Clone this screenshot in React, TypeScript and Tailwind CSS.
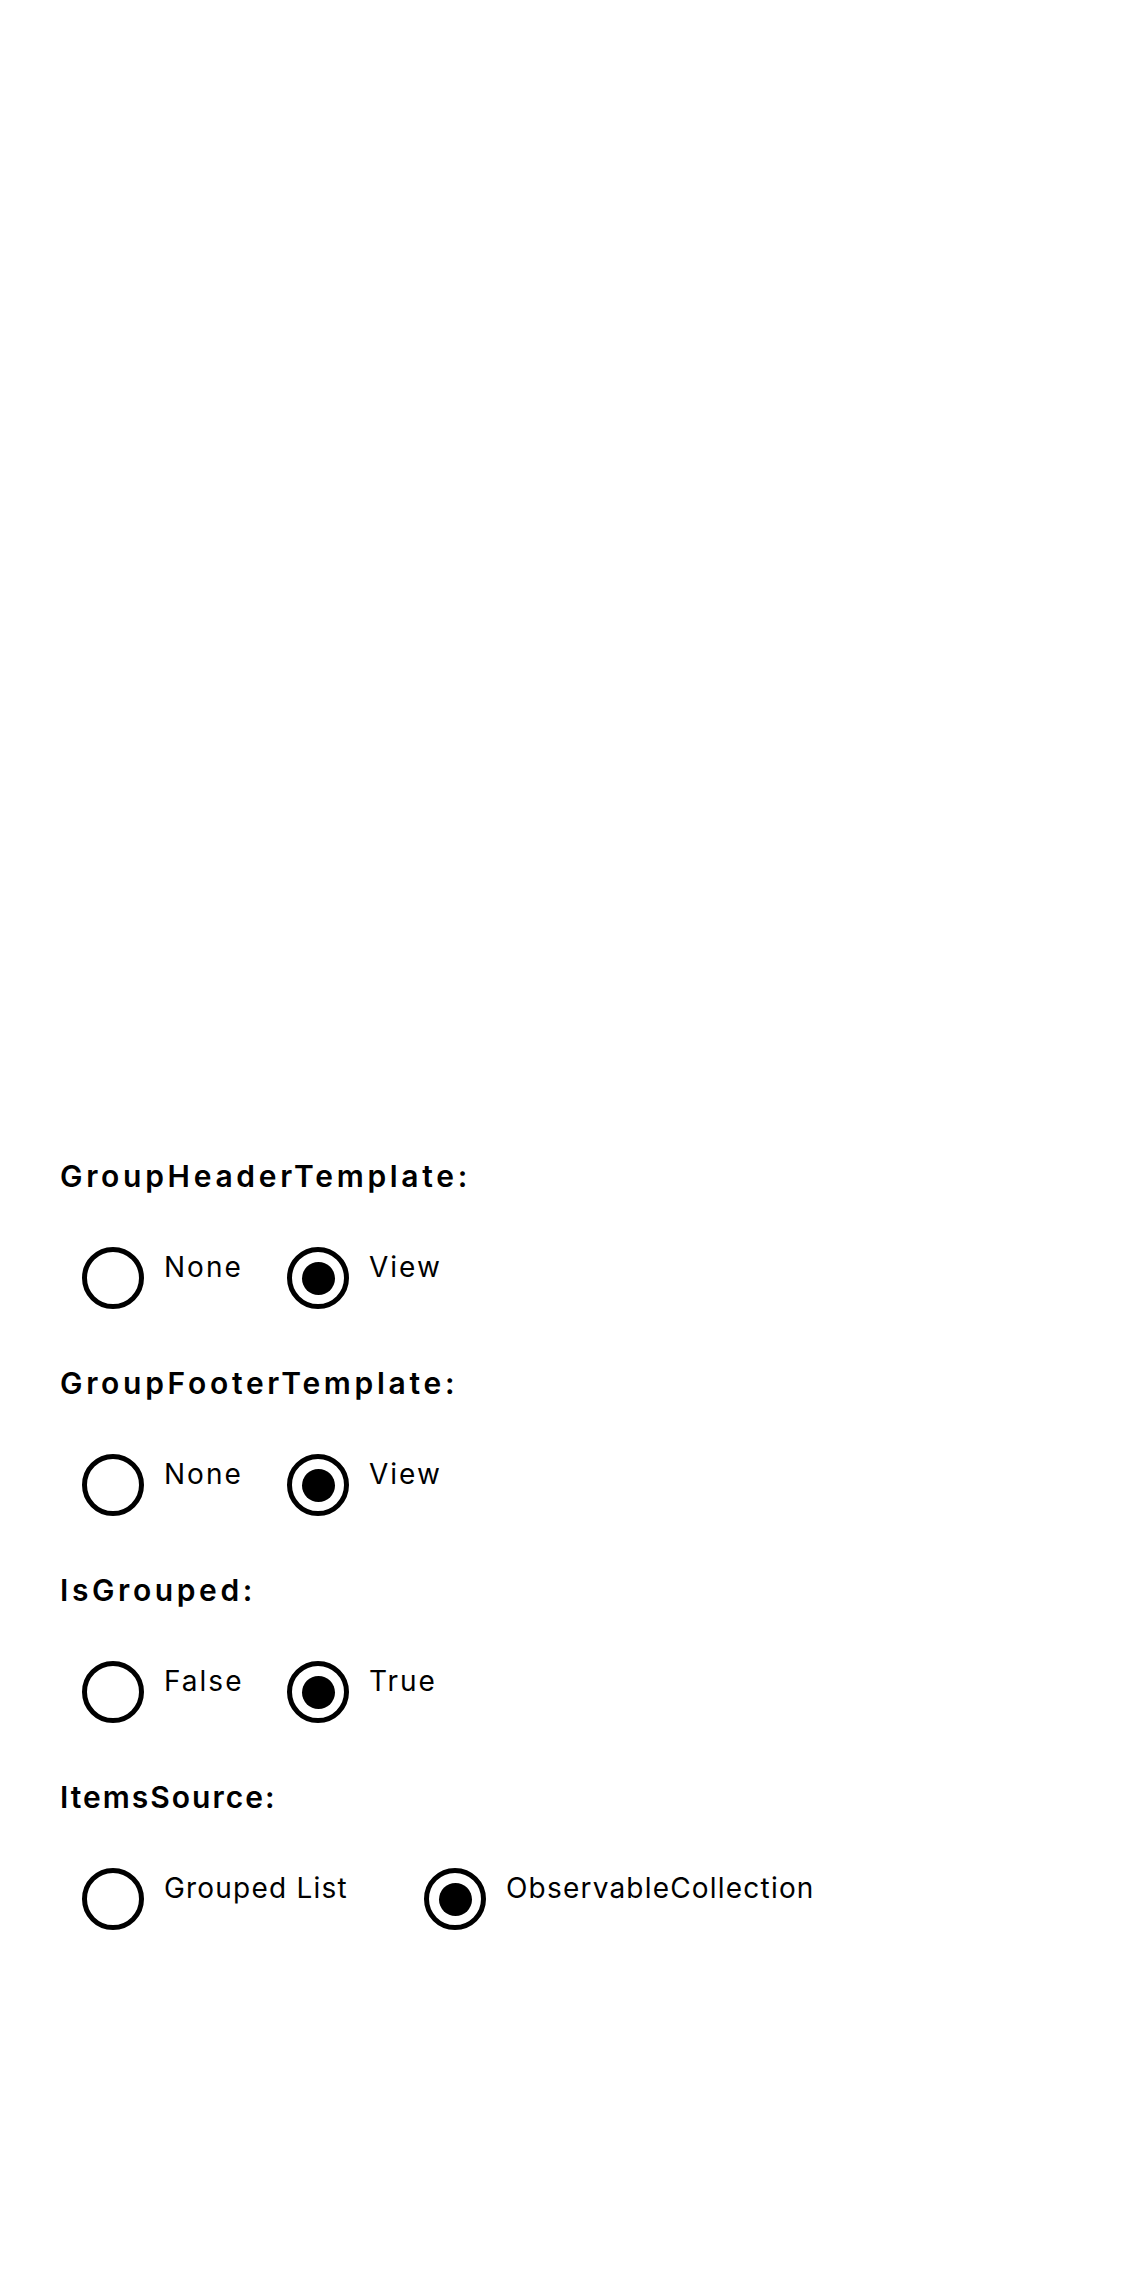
const sections = [
  { title: "GroupHeaderTemplate:", options: ["None", "View"], selected: 1, firstWidth: "w-[205px]", titleTrack: "tracking-[3.7px]", labelTrack: "tracking-[2px]" },
  { title: "GroupFooterTemplate:", options: ["None", "View"], selected: 1, firstWidth: "w-[205px]", titleTrack: "tracking-[3.7px]", labelTrack: "tracking-[2px]" },
  { title: "IsGrouped:", options: ["False", "True"], selected: 1, firstWidth: "w-[205px]", titleTrack: "tracking-[3.6px]", labelTrack: "tracking-[2px]" },
  { title: "ItemsSource:", options: ["Grouped List", "ObservableCollection"], selected: 1, firstWidth: "w-[342px]", titleTrack: "tracking-[2px]", labelTrack: "tracking-[1.2px]" },
];

function Radio({ checked }: { checked: boolean }) {
  return (
    <span className="flex h-[62px] w-[62px] shrink-0 items-center justify-center rounded-full border-[5px] border-black">
      {checked && <span className="h-[33px] w-[33px] rounded-full bg-black" />}
    </span>
  );
}

export default function App() {
  return (
    <div
      className="min-h-[2286px] w-[1124px] bg-white pl-[60px] pt-[1158px] text-black"
      style={{ fontFamily: "Inter, 'Noto Sans', sans-serif" }}
    >
      {sections.map((s, i) => (
        <section key={s.title} className={i > 0 ? "mt-[56px]" : ""}>
          <h2 className={`text-[30px] font-semibold leading-[36px] ${s.titleTrack}`}>{s.title}</h2>
          <div className="mt-[53px] flex pl-[22px]">
            {s.options.map((opt, j) => (
              <label
                key={opt}
                className={`flex items-start gap-[20px] ${j === 0 ? s.firstWidth : ""}`}
              >
                <Radio checked={j === s.selected} />
                <span className={`mt-[3px] text-[28px] leading-[34px] ${s.labelTrack}`}>{opt}</span>
              </label>
            ))}
          </div>
        </section>
      ))}
    </div>
  );
}
